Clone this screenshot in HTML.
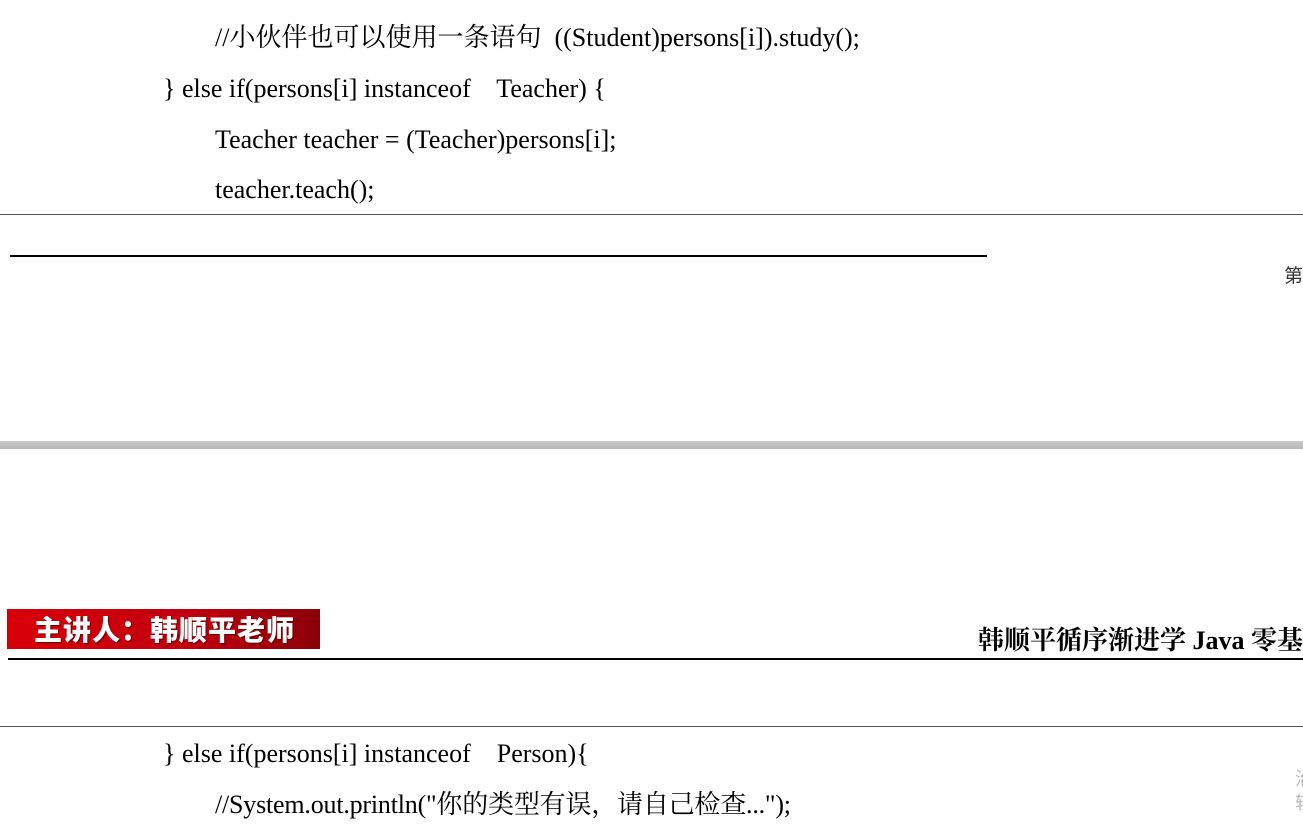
<!DOCTYPE html>
<html><head><meta charset="utf-8"><style>
body{margin:0;width:1303px;height:826px;position:relative;overflow:hidden;background:#fff;font-family:"Liberation Serif","Noto Serif CJK SC",serif;color:#000}
.t{position:absolute;font-size:26px;white-space:nowrap;line-height:30px}
.l{position:absolute}
</style></head><body>
<div class="t" style="left:215px;top:23px">//小伙伴也可以使用一条语句&nbsp; ((Student)persons[i]).study();</div>
<div class="t" style="left:163px;top:74px">} else if(persons[i] instanceof&nbsp;&nbsp;&nbsp; Teacher) {</div>
<div class="t" style="left:215px;top:125px">Teacher teacher = (Teacher)persons[i];</div>
<div class="t" style="left:215px;top:175px">teacher.teach();</div>
<div class="l" style="left:0;top:214px;width:1303px;height:1px;background:#555"></div>
<div class="l" style="left:10px;top:255px;width:977px;height:2px;background:#000"></div>
<div class="t" style="left:1284px;top:260px;font-size:19px;color:#333;font-family:'Noto Sans CJK SC',sans-serif">第</div>
<div class="l" style="left:0;top:441px;width:1303px;height:8px;background:linear-gradient(#c8c8c8,#b8b8b8)"></div>
<div class="l" style="left:7px;top:609px;width:313px;height:40px;background:linear-gradient(90deg,#d80008,#c00010 60%,#8a0008);color:#fff;font:900 28px 'Noto Sans CJK SC',sans-serif;line-height:40px;text-indent:27px;letter-spacing:1px;text-shadow:1px 1px 1px #600">主讲人：韩顺平老师</div>
<div class="t" style="right:0;top:626px;font-weight:bold;font-size:26px">韩顺平循序渐进学 Java 零基</div>
<div class="l" style="left:8px;top:658px;width:1295px;height:2px;background:#000"></div>
<div class="l" style="left:0;top:726px;width:1303px;height:1px;background:#555"></div>
<div class="t" style="left:163px;top:739px">} else if(persons[i] instanceof&nbsp;&nbsp;&nbsp; Person){</div>
<div class="t" style="left:215px;top:790px;letter-spacing:-0.2px">//System.out.println("你的类型有误，请自己检查...");</div>
<div class="t" style="left:1295px;top:766px;font-size:18px;color:#bbb;line-height:24px;font-family:'Noto Sans CJK SC',sans-serif">治<br>轻</div>
</body></html>
